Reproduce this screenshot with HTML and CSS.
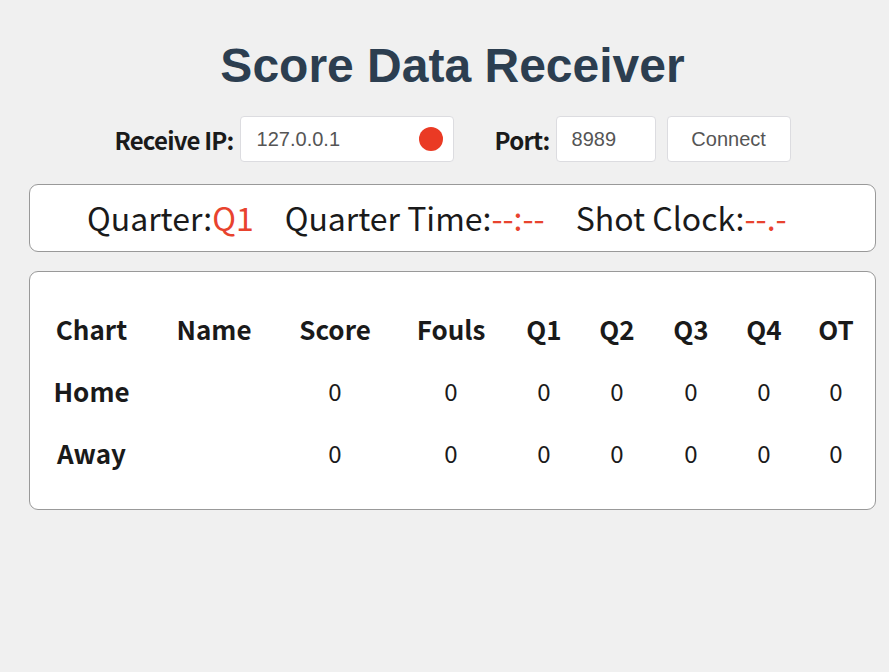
FILE: index.html
```html
<!DOCTYPE html>
<html>
<head>
<meta charset="utf-8">
<link rel="stylesheet" href="styles.css">
</head>
<body>
<div class="app">
  <h1 class="title">Score Data Receiver</h1>
  <div class="controls">
    <label class="label">Receive IP:</label>
    <div class="input ip-input">
      <span class="input-text">127.0.0.1</span>
      <span class="status-dot"></span>
    </div>
    <label class="label port-label">Port:</label>
    <div class="input port-input"><span class="input-text">8989</span></div>
    <button class="btn">Connect</button>
  </div>
  <div class="panel status-panel">
    <span class="stat">Quarter:<span class="val">Q1</span></span>
    <span class="stat">Quarter Time:<span class="val">--:--</span></span>
    <span class="stat">Shot Clock:<span class="val">--.-</span></span>
  </div>
  <div class="panel table-panel">
    <div class="grid">
      <div class="th">Chart</div><div class="th">Name</div><div class="th">Score</div><div class="th">Fouls</div><div class="th">Q1</div><div class="th">Q2</div><div class="th">Q3</div><div class="th">Q4</div><div class="th">OT</div>
      <div class="th">Home</div><div class="td"></div><div class="td">0</div><div class="td">0</div><div class="td">0</div><div class="td">0</div><div class="td">0</div><div class="td">0</div><div class="td">0</div>
      <div class="th">Away</div><div class="td"></div><div class="td">0</div><div class="td">0</div><div class="td">0</div><div class="td">0</div><div class="td">0</div><div class="td">0</div><div class="td">0</div>
    </div>
  </div>
</div>
</body>
</html>
```
FILE: styles.css
```css
html, body {
  margin: 0;
  padding: 0;
  background: #f0f0f0;
}
body {
  font-family: "Noto Sans CJK SC", "Noto Sans", sans-serif;
  color: #1a1a1a;
}
.app {
  width: 847px;
  margin-left: 29px;
  padding-top: 34px;
}
.title {
  margin: 0;
  font-family: "Liberation Sans", Arial, sans-serif;
  font-size: 48px;
  font-weight: bold;
  line-height: 64px;
  color: #2c3e50;
  text-align: center;
}
.controls {
  display: flex;
  align-items: center;
  justify-content: center;
  margin-top: 18px;
  height: 46px;
}
.label {
  font-size: 24px;
  font-weight: 600;
  color: #1a1a1a;
  margin-right: 6px;
  letter-spacing: -0.8px;
}
.port-label {
  margin-left: 41px;
}
.input {
  box-sizing: border-box;
  height: 46px;
  background: #fff;
  border: 1px solid #dcdce0;
  border-radius: 4px;
  display: flex;
  align-items: center;
  font-family: "Liberation Sans", Arial, sans-serif;
  font-size: 20px;
  color: #555;
}
.input-text {
  flex: 1;
}
.ip-input {
  width: 214px;
  padding: 0 10px 0 16px;
}
.port-input {
  width: 100px;
  padding-left: 15px;
}
.status-dot {
  width: 24px;
  height: 24px;
  border-radius: 50%;
  background: #ea3a24;
}
.btn {
  box-sizing: border-box;
  margin-left: 11px;
  width: 124px;
  height: 46px;
  background: #fff;
  border: 1px solid #dcdce0;
  border-radius: 4px;
  font-family: "Liberation Sans", Arial, sans-serif;
  font-size: 20px;
  color: #555;
  padding: 0;
}
.panel {
  background: #fff;
  border: 1px solid #999;
  border-radius: 9px;
  box-sizing: border-box;
}
.status-panel {
  margin-top: 22px;
  height: 68px;
  display: flex;
  align-items: center;
  padding-left: 57px;
  padding-bottom: 2px;
  gap: 31px;
  font-size: 32px;
  font-weight: 400;
}
.val {
  color: #e8432e;
}
.table-panel {
  margin-top: 19px;
  height: 239px;
  padding-top: 25px;
}
.grid {
  display: grid;
  grid-template-columns: 123px 122px 120px 112px 74px 72px 76px 70px 74px;
  grid-auto-rows: 62px;
}
.th, .td {
  display: flex;
  align-items: center;
  justify-content: center;
}
.th {
  font-size: 26px;
  font-weight: 600;
}
.td {
  font-size: 24px;
  font-weight: 400;
}
```
